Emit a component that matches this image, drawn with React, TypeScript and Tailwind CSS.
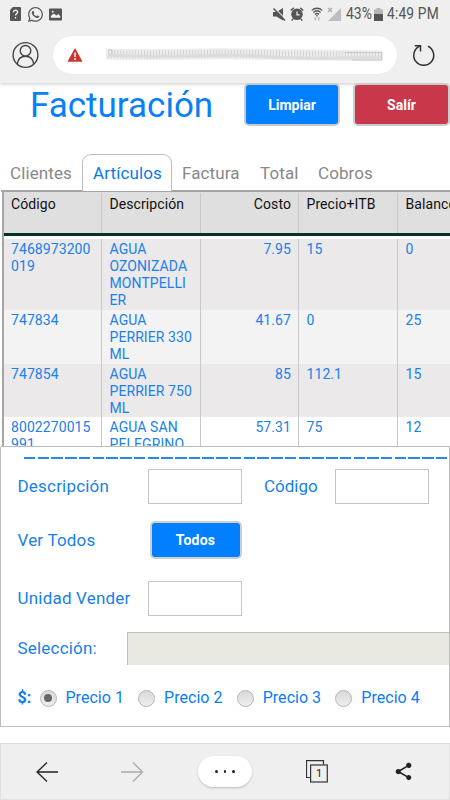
import { FaWhatsapp } from 'react-icons/fa'
import { MdShare } from 'react-icons/md'

const tabs = [
  { name: 'Clientes', className: 'w-[82px] pl-[10px]' },
  { name: 'Artículos', className: 'w-[90px] pl-[10px] h-[37px] rounded-t-[9px] border border-b-0 border-[#bdbdbd] bg-white text-[#0a7bea] leading-[36px]' },
  { name: 'Factura', className: 'w-[88px] pl-[10px]' },
  { name: 'Total', className: 'w-[58px]' },
  { name: 'Cobros', className: 'w-[70px]' },
]

const rows = [
  { code: ['7468973200', '019'], description: ['AGUA', 'OZONIZADA', 'MONTPELLI', 'ER'], cost: '7.95', price: '15', balance: '0', className: 'h-[71px] bg-[#ebe9ea]' },
  { code: ['747834'], description: ['AGUA', 'PERRIER 330', 'ML'], cost: '41.67', price: '0', balance: '25', className: 'h-[54px] bg-[#f3f3f3]' },
  { code: ['747854'], description: ['AGUA', 'PERRIER 750', 'ML'], cost: '85', price: '112.1', balance: '15', className: 'h-[53px] bg-[#ebe9ea]' },
  { code: ['8002270015', '991'], description: ['AGUA SAN', 'PELEGRINO'], cost: '57.31', price: '75', balance: '12', className: 'h-[30px] bg-white' },
]

const prices = ['Precio 1', 'Precio 2', 'Precio 3', 'Precio 4']

const columns = 'grid grid-cols-[98px_99px_98px_99px_52px]'
const cell = 'border-r border-[#c9c9cb] pl-[7.5px] first:pl-[7px] whitespace-nowrap last:border-r-0'

function StatusBar() {
  return (
    <div className="flex h-7 items-center pl-[10px] pr-[10px] text-[#555]">
      <svg width="11" height="14" viewBox="0 0 11 14">
        <path d="M3 0h7a1 1 0 0 1 1 1v12a1 1 0 0 1-1 1H1a1 1 0 0 1-1-1V3z" fill="#555" />
        <path d="M3.4 5.2c0-2.7 4.4-2.5 4.2 0-.1 1.5-2.1 1.6-2.1 3.3M5.5 10v1.6" fill="none" stroke="#f2f2f2" strokeWidth="1.4" />
      </svg>
      <FaWhatsapp className="ml-[6px]" size={17} />
      <svg className="ml-[5px]" width="13" height="13" viewBox="0 0 14 13">
        <rect width="14" height="13" rx="1" fill="#555" />
        <path d="M2 10V8l3-2.5 3 2 2-1.5 2.2 2.5V10z" fill="#f2f2f2" />
        <circle cx="4" cy="3.5" r="1" fill="#f2f2f2" />
      </svg>
      <div className="ml-auto flex items-center">
        <svg width="13" height="13" viewBox="0 0 13 13">
          <path d="M0 4h3.5L10 0v12.500L3.5 8.500H0z" fill="#555" />
          <path d="M1.500 0l12 12" stroke="#efefef" strokeWidth="1.200" />
          <path d="M.5.5l11.500 12" stroke="#555" strokeWidth="1.500" />
        </svg>
        <svg className="ml-[4px]" width="14" height="14" viewBox="0 0 14 14">
          <circle cx="7" cy="7.3" r="5.800" fill="#555" />
          <path d="M.7 3.5L3.800.900M13.300 3.500L10.200.900M3 12l-1.300 1.500M11 12l1.300 1.500" stroke="#555" strokeWidth="1.500" />
          <path d="M7 4.400V7.900h2.600" fill="none" stroke="#f2f2f2" strokeWidth="1.200" />
        </svg>
        <svg className="ml-[7px]" width="12" height="14" viewBox="0 0 12 14" fill="none" stroke="#555" strokeWidth="1.3">
          <path d="M.8 3.4c3-2.9 7.4-2.9 10.4 0M2.4 5.5c2.1-2 5.1-2 7.2 0M4 7.4c1.2-1.1 2.8-1.1 4 0" />
          <path d="M6 8v1.5" />
          <path d="M4.3 10v3.4M7.7 10v3.4M3.3 12h2M6.7 11h2" stroke="#bbb" />
        </svg>
        <svg className="ml-[4px]" width="14" height="14" viewBox="0 0 14 14">
          <path d="M14 1v13H1z" fill="#bdbdbd" />
          <path d="M1 1l4 4M5 1L1 5" stroke="#aaa" strokeWidth="1.2" />
        </svg>
        <span className="ml-[5px] w-[26px] origin-left scale-x-[0.87] text-[16px]">43%</span>
        <svg className="ml-[2px]" width="9" height="13" viewBox="0 0 9 13">
          <path d="M2.5 0h4v1.5H9V6H0V1.5h2.5z" fill="#b5b5b5" />
          <path d="M0 6h9v7H0z" fill="#555" />
        </svg>
        <span className="ml-[4px] w-[53px] origin-left scale-x-[0.86] whitespace-nowrap text-[16px] tracking-[0.2px]">4:49 PM</span>
      </div>
    </div>
  )
}

function AddressBar() {
  return (
    <div className="flex h-[55px] items-center pl-[12px] pr-[14px] pb-[2px]">
      <svg width="28" height="28" viewBox="0 0 28 28" fill="none" stroke="#444" strokeWidth="1.4">
        <circle cx="13.5" cy="14" r="12.4" />
        <circle cx="13.5" cy="9.8" r="5.3" />
        <path d="M5.3 23c.7-4.8 4-7.7 8.2-7.7s7.5 2.9 8.2 7.7" />
      </svg>
      <div className="ml-[13px] flex h-[38px] w-[344px] items-center rounded-full bg-white pl-[14px] shadow-[0_0_1px_#ddd]">
        <svg width="16" height="14" viewBox="0 0 16 14">
          <path d="M8 0l7.6 13.7H.4z" fill="#c9372c" />
          <path d="M8 4.5v4.5M8 10.3v1.7" stroke="#fff" strokeWidth="1.5" />
        </svg>
        <svg className="ml-[22px]" width="282" height="16" viewBox="0 0 282 16" fill="none">
          <path d="M1 7C50 9 90 6 138 7S230 8 277 9" stroke="#ededed" strokeWidth="11" />
          <path d="M3 7C50 9 90 6 138 7S230 8 277 9" stroke="#d2d2d2" strokeWidth="8" strokeDasharray="1 2" />
          <path d="M3 8C60 12 110 6 150 9s80 3 127 1" stroke="#dcdcdc" strokeWidth="3" />
          <path d="M240 5.500h37v7.500h-30M3 3h4v4" stroke="#c0c0c0" strokeWidth=".8" />
        </svg>
      </div>
      <svg className="ml-auto" width="24" height="24" viewBox="0 0 24 24" fill="none" stroke="#333" strokeWidth="1.5">
        <path d="M16 3.3A10 10 0 1 1 7.5 3.3" />
        <path d="M2.8 2.7h5.7v5.7" />
      </svg>
    </div>
  )
}

function ArticlesTable() {
  return (
    <div className="ml-[1px] h-[257px] overflow-hidden border-b border-t-2 border-b-[#bbb] border-t-[#a5a5a5] text-[14px] tracking-[0.08px]">
      <div className="ml-px border-l-2 border-[#a5a5a5]">
        <div className={`${columns} h-[44px] border-b-[3px] border-[#063324] bg-[#dfdfdf] pt-[1px] leading-[22px] text-[#111]`}>
          <div className={cell}>Código</div>
          <div className={cell}>Descripción</div>
          <div className={`${cell} pr-[7px] text-right`}>Costo</div>
          <div className={cell}>Precio+ITB</div>
          <div className={cell}>Balance</div>
        </div>
        <div className="h-[3px] bg-white" />
        {rows.map((row) => (
          <div key={row.code[0]} className={`${columns} ${row.className} overflow-hidden leading-[16.9px] text-[#1a80ea]`}>
            <div className={`${cell} pt-[2px]`}>
              {row.code.map((line) => <div key={line}>{line}</div>)}
            </div>
            <div className={`${cell} pt-[2px]`}>
              {row.description.map((line) => <div key={line}>{line}</div>)}
            </div>
            <div className={`${cell} pr-[7px] pt-[2px] text-right`}>{row.cost}</div>
            <div className={`${cell} pt-[2px]`}>{row.price}</div>
            <div className={`${cell} pt-[2px]`}>{row.balance}</div>
          </div>
        ))}
      </div>
    </div>
  )
}

function SaleForm() {
  return (
    <div className="h-[280px] border border-t-0 border-[#bdbdbd] text-[17px] tracking-[0.2px] text-[#177fe8]">
      <div className="ml-[23px] h-[12px] pt-[10px]">
        <div className="h-[2px] bg-[repeating-linear-gradient(90deg,#2b86e4_0_11.5px,transparent_11.5px_13.73px)]" />
      </div>
      <div className="mt-[10px] flex h-[35px] items-center pl-[16px]">
        <label className="w-[131px] pl-[0.5px] pt-[1px]">Descripción</label>
        <input className="h-[35px] w-[94px] border border-[#c4c4c4]" />
        <label className="ml-[22px] w-[71px] pt-[1px] tracking-normal">Código</label>
        <input className="h-[35px] w-[94px] border border-[#c4c4c4]" />
      </div>
      <div className="mt-[17px] flex h-[38px] items-center pl-[16px]">
        <label className="w-[132.5px] pl-[0.5px] pt-[2px]">Ver Todos</label>
        <button className="h-[38px] w-[92px] rounded-[5px] border-2 border-[#cdcfd0] bg-[#007fff] text-[14px] font-bold text-white">Todos</button>
      </div>
      <div className="mt-[22px] flex h-[35px] items-center pl-[16px]">
        <label className="w-[131px] pl-[0.5px] pt-[1px]">Unidad Vender</label>
        <input className="h-[35px] w-[94px] border border-[#c4c4c4]" />
      </div>
      <div className="mt-[16px] flex h-[33px] items-center pl-[16px]">
        <label className="w-[109.5px] pl-[0.5px] pt-[1px]">Selección:</label>
        <div className="h-[33px] flex-1 border-l border-t border-[#c0c0bc] bg-[#e9e9e1]" />
      </div>
      <div className="mt-[23px] flex h-[20px] items-center pl-[16.5px] text-[16px] tracking-[0.03px] text-[#087df5]">
        <b className="w-[22px]">$:</b>
        {prices.map((price, index) => (
          <label key={price} className="flex w-[98.6px] items-center whitespace-nowrap">
            <span className="flex size-[17px] items-center justify-center rounded-full border border-[#b5b5b5] bg-linear-to-b from-[#d9d9d9] to-[#eee]">
              {index === 0 && <span className="size-[8px] rounded-full bg-[#666]" />}
            </span>
            <span className="ml-[9px]">{price}</span>
          </label>
        ))}
      </div>
    </div>
  )
}

function BottomBar() {
  return (
    <div className="mt-[16px] flex h-[57px] items-center border border-[#e0e0e0] bg-[#efefef]">
      <svg className="ml-[35px]" width="23" height="22" viewBox="0 0 23 22" fill="none" stroke="#222" strokeWidth="1.3">
        <path d="M22 11H1M11 1.5L1 11l10 9.5" />
      </svg>
      <svg className="ml-[62px]" width="23" height="22" viewBox="0 0 23 22" fill="none" stroke="#aaa" strokeWidth="1.3">
        <path d="M0 11h21M12 1.5l9.5 9.5-9.5 9.5" />
      </svg>
      <div className="ml-[54px] flex h-[31px] w-[54px] items-center justify-center gap-[6px] rounded-full bg-white shadow-[0_1px_2px_#bbb]">
        <i className="size-[2.5px] rounded-full bg-[#222]" />
        <i className="size-[2.5px] rounded-full bg-[#222]" />
        <i className="size-[2.5px] rounded-full bg-[#222]" />
      </div>
      <svg className="ml-[54px]" width="22" height="23" viewBox="0 0 22 23" fill="none" stroke="#333" strokeWidth="1.2">
        <path d="M4.5 17.5h-4V.6h17v4" />
        <rect x="4.6" y="5" width="16.7" height="17" />
        <text x="13" y="17.3" textAnchor="middle" fontSize="11" fill="#222" stroke="none">1</text>
      </svg>
      <MdShare className="ml-[65px] text-[#222]" size={21} />
    </div>
  )
}

export default function App() {
  return (
    <div className="h-[800px] w-[450px] overflow-hidden bg-white font-['Roboto',sans-serif]">
      <div className="h-[83px] bg-[#efefef] shadow-[0_1px_4px_#ccc]">
        <StatusBar />
        <AddressBar />
      </div>
      <div className="flex h-[71px] pl-[30px]">
        <h1 className="w-[214px] pt-[1px] text-[35px] leading-[44px] text-[#0a80f5]">Facturación</h1>
        <button className="h-[43px] w-[96px] rounded-[5px] border-[2.5px] border-[#c7cacc] bg-[#007fff] pt-[1px] text-[14px] font-bold text-white">Limpiar</button>
        <button className="ml-[13px] h-[43px] w-[97px] rounded-[5px] border-[2.5px] border-[#c9cbcc] bg-[#c9384a] pt-[1px] text-[14px] font-bold text-white">Salír</button>
      </div>
      <div className="flex h-[36px] items-start text-[17px] leading-[38px] tracking-[0.1px] text-[#888]">
        {tabs.map((tab) => (
          <div key={tab.name} className={tab.className}>{tab.name}</div>
        ))}
      </div>
      <ArticlesTable />
      <SaleForm />
      <BottomBar />
    </div>
  )
}
